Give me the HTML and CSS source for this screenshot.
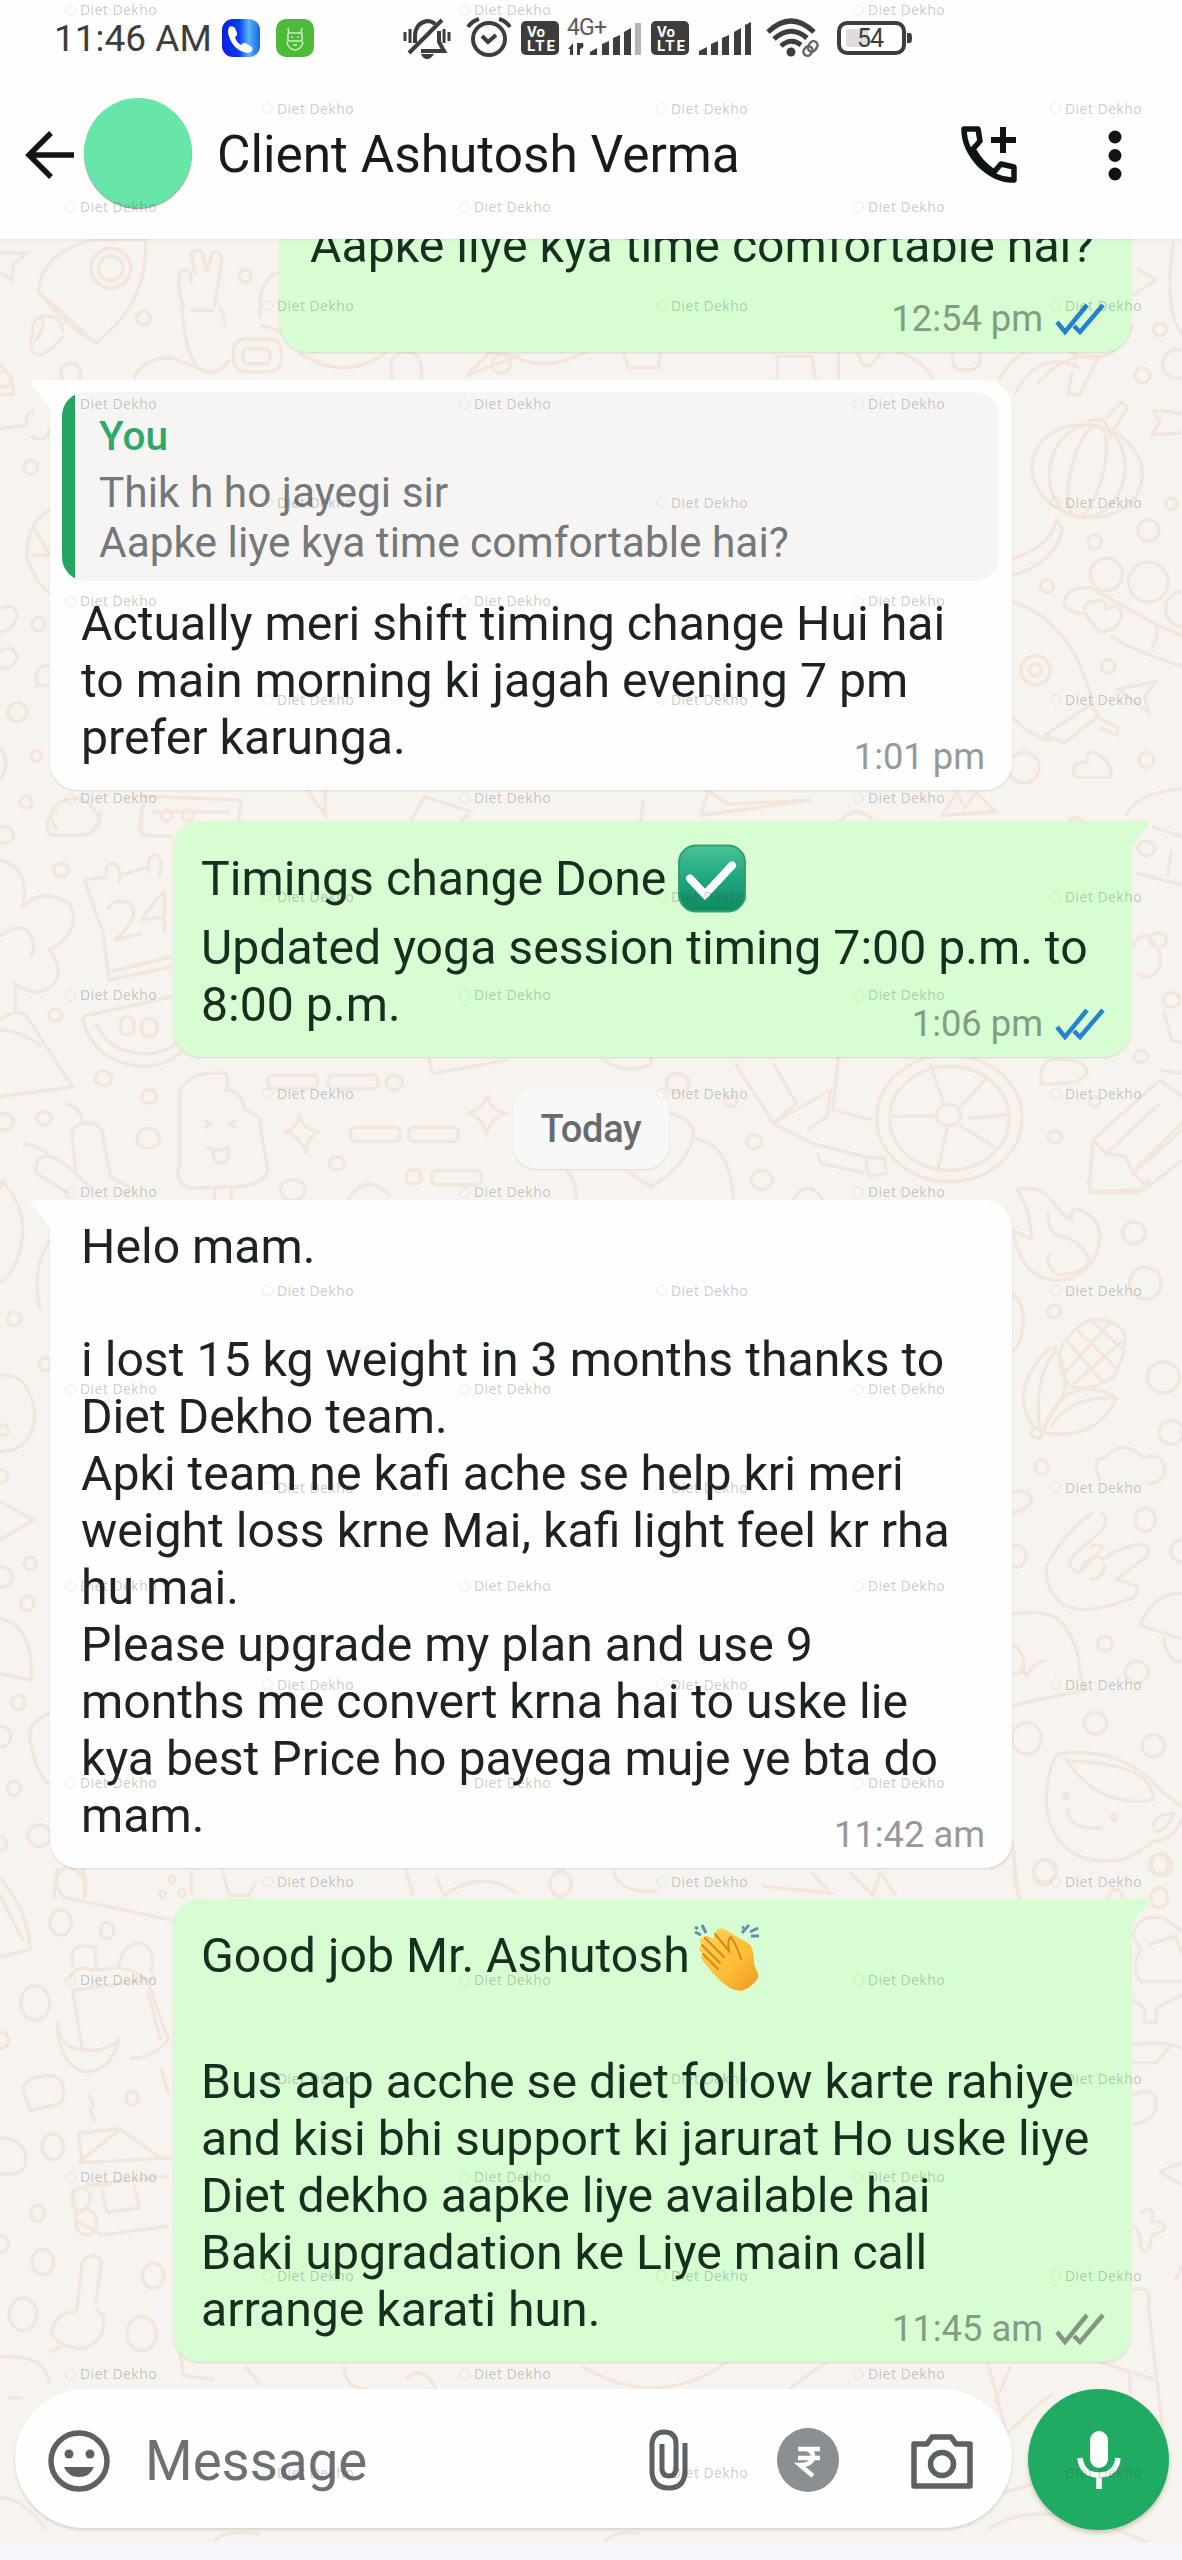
FILE: index.html
```html
<!DOCTYPE html>
<html lang="en">
<head>
<meta charset="utf-8">
<title>Client Ashutosh Verma</title>
<link rel="stylesheet" href="styles.css">
</head>
<body>
<div class="phone">

<svg class="wallpaper" viewBox="0 0 1182 2560" aria-hidden="true">
  <g transform="translate(0 230) scale(.3827)">
    <path d="M100 160Q110 60 240 25H380Q390 190 250 295ZM100 160Q160 240 250 295M165 280Q150 300 110 325Q70 330 85 270Q80 225 120 225Q165 225 165 270M110 230q10 30 -20 60M0 60H70L35 90L30 130L0 110M480 200Q460 150 470 110Q500 90 500 140M510 120L500 60Q515 45 530 60L540 110L555 60Q575 50 580 80L560 200M475 190Q480 300 510 350Q550 400 600 340M575 200L590 250M500 210h60M680 230Q670 130 730 110M680 250Q720 250 760 290M350 385Q380 330 450 335L540 370M0 350Q35 380 35 430H0M0 520L70 510Q60 490 90 470M80 540Q120 560 130 520M135 730Q70 760 70 850Q90 920 130 950M90 780L130 850L80 850M0 990Q40 970 45 1010Q30 1050 0 1050M0 1100Q40 1080 45 1120Q20 1160 0 1140M130 1140Q90 1130 95 1190H130M780 320Q900 400 1010 320M1025 390Q1010 320 1060 318Q1110 320 1100 390M1220 380L1280 320L1350 330L1220 380M1340 330Q1440 380 1560 300M150 1568Q110 1510 170 1490Q230 1470 260 1540L240 1568M360 1568L380 1480L630 1490L620 1568M400 1520h200M800 1460L850 1530L850 1460M1060 1568L1110 1480L1230 1520L1180 1568M0 1350Q30 1390 0 1440"/>
    <circle cx="290" cy="100" r="52"/><circle cx="290" cy="100" r="32"/><circle cx="640" cy="120" r="16"/><circle cx="375" cy="230" r="18"/><circle cx="185" cy="375" r="26"/><circle cx="10" cy="390" r="20"/><circle cx="80" cy="620" r="18"/><circle cx="100" cy="1030" r="17"/><circle cx="45" cy="1260" r="25"/><circle cx="95" cy="1375" r="14"/><circle cx="68" cy="1495" r="16"/><circle cx="435" cy="1530" r="14"/><circle cx="490" cy="1530" r="14"/><circle cx="1310" cy="350" r="24"/>
    <rect x="610" y="285" width="125" height="85" rx="30"/><rect x="635" y="310" width="70" height="40" rx="14"/>
  </g>
  <g transform="translate(582 230) scale(.3827)">
    <path d="M1450 100L1500 130L1440 170M1545 30Q1520 220 1568 270M1090 390Q1170 260 1280 320Q1380 370 1440 250M1130 430Q1190 310 1300 360M1190 400Q1260 320 1350 330L1300 430L1270 430L1280 370M1320 500Q1380 480 1380 545M1370 490L1410 450L1425 465L1390 520M1490 470L1568 480M1490 470L1510 500L1490 535L1568 530M1120 860Q1220 830 1240 760L1255 780Q1240 870 1120 905M1260 980Q1260 930 1330 935L1500 1030L1568 1060M1260 980Q1290 1010 1320 1000M1120 970Q1290 1020 1340 1260M1120 1270Q1180 1330 1230 1335M1210 1320L1330 1240L1350 1270L1260 1340ZM1340 1270L1400 1300L1400 1320L1350 1300M1400 1200L1500 1180L1470 1220L1480 1260ZM1320 1010Q1300 970 1340 970Q1370 960 1370 990Q1410 970 1410 1010Q1400 1050 1350 1050ZM1290 1430Q1270 1390 1320 1390Q1320 1350 1350 1370Q1390 1400 1380 1430ZM1420 1530Q1450 1470 1568 1460M1380 1060Q1440 1100 1568 1140M1500 1030Q1510 1060 1490 1090M510 390V330H600L610 390M670 390V320M720 320Q740 390 780 320M820 320Q880 330 920 390M110 320L120 360L200 360L205 320M970 320Q960 370 1000 365Q1050 370 1040 320M150 1568L160 1490M310 1530L330 1465L380 1500L600 1490L310 1530M660 1568Q700 1490 760 1540M940 1530L980 1470L1000 1510L1030 1470L1080 1520ZM1260 1568Q1290 1500 1320 1568"/>
    <ellipse cx="1320" cy="630" rx="145" ry="120" transform="rotate(12 1320 630)"/><ellipse cx="1320" cy="630" rx="98" ry="122" transform="rotate(12 1320 630)"/><ellipse cx="1320" cy="630" rx="42" ry="122" transform="rotate(14 1320 630)"/>
    <circle cx="1510" cy="260" r="17"/><circle cx="1465" cy="380" r="20"/><circle cx="1555" cy="350" r="38"/><circle cx="1340" cy="815" r="18"/><circle cx="1480" cy="785" r="28"/><circle cx="1540" cy="715" r="15"/><circle cx="1215" cy="930" r="17"/><circle cx="1370" cy="900" r="42"/><circle cx="1480" cy="920" r="52"/><circle cx="1570" cy="990" r="45"/><circle cx="1375" cy="1140" r="18"/><circle cx="1185" cy="1150" r="38"/><circle cx="1185" cy="1150" r="16"/><circle cx="1475" cy="1385" r="20"/><circle cx="1155" cy="1405" r="40"/>
  </g>
  <g transform="translate(0 810) scale(.3827 .3333)">
    <path d="M0 150Q80 170 60 290Q110 230 180 280Q220 360 130 420Q180 500 120 540Q80 560 40 520V610M0 380Q40 340 70 360Q100 400 80 440M0 630Q50 590 70 620L190 830L0 860M0 660Q50 660 110 710M280 200Q270 160 300 160Q320 180 310 220M390 190Q380 130 410 135Q430 160 415 200M320 195L385 170M220 210L280 200M220 210L270 370L285 510L450 470M290 485L450 440M280 300Q300 260 340 280Q370 320 300 390L370 370M430 240Q380 310 370 330L430 320M430 250V370M215 620L450 560M215 620Q240 760 380 770Q470 760 490 690M250 640Q290 740 400 730Q450 720 470 690M470 840Q500 780 590 790Q600 820 590 840Q630 840 640 900Q690 920 680 950L700 1080Q690 1130 610 1130L500 1135Q450 1120 470 1060ZM560 1135V1170M605 1130V1170M530 930l20 10l-15 15M620 930l-20 10l15 15M540 1010Q570 1030 600 1010M555 1020Q560 1060 575 1060Q600 1060 595 1015M780 910Q790 960 835 965Q800 980 800 1030Q780 970 740 965Q780 960 780 910M1275 855Q1280 900 1320 910Q1285 925 1270 970Q1260 920 1220 910Q1260 900 1275 855M170 880Q220 900 215 940Q180 950 190 1000L200 1100M215 940Q270 930 270 990L290 1100L350 1140M60 1000Q110 1010 130 1040Q90 1030 95 1090L180 1150M130 1040Q170 1050 240 1140M1120 745L1130 790L1330 750M910 1170Q960 1080 1020 1160M1480 1080Q1510 1120 1505 1170M130 75Q110 30 150 0M130 75H220Q270 60 260 0M370 0V75L450 80M0 1110Q60 1170 60 1270Q50 1380 0 1420M130 1290Q80 1380 105 1500"/>
    <circle cx="10" cy="75" r="25"/><circle cx="160" cy="180" r="20"/><circle cx="145" cy="615" r="18"/><circle cx="270" cy="805" r="22"/><circle cx="390" cy="860" r="20"/><circle cx="10" cy="935" r="25"/><circle cx="115" cy="925" r="20"/><circle cx="388" cy="985" r="30"/><circle cx="880" cy="1060" r="20"/><circle cx="1030" cy="818" r="22"/><circle cx="765" cy="1140" r="32"/>
    <rect x="315" y="620" width="35" height="55" rx="18"/><rect x="370" y="625" width="40" height="55" rx="20"/><rect x="700" y="795" width="130" height="42" rx="14"/><rect x="858" y="795" width="130" height="42" rx="14"/><rect x="915" y="952" width="130" height="42" rx="14"/><rect x="1068" y="952" width="130" height="42" rx="14"/><rect x="1128" y="1082" width="130" height="42" rx="14"/><rect x="1062" y="1080" width="38" height="42" rx="14"/>
  </g>
  <g transform="translate(582 810) scale(.3827 .3333)">
    <path d="M1490 50L1568 80M1450 190L1568 225M1540 120L1530 200M1440 410Q1450 370 1480 380Q1520 420 1510 470Q1480 520 1450 490M1520 600L1540 690L1568 700M400 760L500 940L560 880L500 760M500 940L600 1000L740 1040M500 940L650 840L640 920L590 960M670 740L655 900L760 930M615 1030L625 1060L740 1090M740 1040L790 1045L795 1090L750 1100ZM1200 800Q1200 740 1250 750Q1320 750 1320 790Q1300 830 1200 820ZM1510 810L1335 990L1325 1145L1470 1140L1568 1050M1335 990L1370 1030L1510 880M1370 1030L1420 1040L1440 1090L1480 1130M1440 1090L1568 960M1510 810L1568 860M1450 1070L1568 940M1510 780L1568 790M230 910Q300 930 290 990Q260 1080 180 1130L120 1085M290 985Q390 1000 395 1170M550 1170Q590 1100 630 1170M50 745Q120 800 180 760V740M910 760L945 880M1060 800L990 890M1110 915L1010 925M1090 1020L985 945M930 1080L955 950M805 920L930 918"/>
    <circle cx="960" cy="925" r="190"/><circle cx="960" cy="925" r="156"/><circle cx="958" cy="915" r="32"/><circle cx="1475" cy="115" r="22"/><circle cx="1505" cy="390" r="22"/><circle cx="1540" cy="570" r="22"/><circle cx="1460" cy="740" r="18"/><circle cx="1235" cy="980" r="18"/><circle cx="450" cy="995" r="20"/><circle cx="470" cy="1110" r="28"/><circle cx="250" cy="820" r="30"/><circle cx="390" cy="875" r="16"/><circle cx="1340" cy="875" r="14"/>
  </g>
  <g transform="translate(990 1180) scale(.3333 .4591)">
    <path d="M80 20Q160 10 190 50Q220 80 245 85Q240 60 270 65Q330 80 330 130Q310 220 190 218Q90 210 70 110L125 130Q120 60 80 20M175 70Q170 110 200 120Q280 130 300 180Q260 210 200 205Q160 180 180 160M290 0L310 28H440L480 0M65 250Q100 260 100 310Q95 360 65 375M180 365Q100 420 100 480Q110 530 150 545Q130 430 195 375M185 365Q230 390 225 460L160 545Q200 460 290 455Q340 455 380 475Q320 570 160 550M180 540Q240 470 370 475M120 555Q130 530 160 545L150 565ZM210 375Q230 330 300 305Q370 300 400 330Q420 360 370 430Q310 460 240 450Q200 410 210 375M230 350L340 440M260 325L380 410M300 305L400 370M225 420L360 310M250 445L405 345M320 630Q310 605 345 605Q400 560 460 605Q520 590 525 635Q510 665 470 660M320 630L330 655M65 680Q120 670 125 700Q110 720 65 725M330 725Q360 730 340 760L240 825Q235 850 270 855L340 800Q330 790 300 800M350 815L430 795Q490 790 470 820L380 870L440 885Q450 910 410 915Q280 950 220 925Q160 890 170 840Q230 760 310 725M270 855Q290 810 340 825L370 815M300 870Q340 870 345 835M65 945Q200 930 230 980Q270 1020 270 1080L290 1110L65 1145M65 1010Q110 1030 100 1070L65 1080M170 1045Q130 1050 110 1080L90 1060M576 900Q490 900 450 970L576 1000M520 995Q530 1050 576 1050M200 1250Q400 1230 520 1335L576 1365M200 1250Q150 1330 180 1400Q230 1500 400 1480Q460 1460 490 1440Q550 1440 576 1390M230 1265Q490 1270 490 1350Q330 1370 230 1265ZM230 1370Q240 1420 340 1410M490 1410Q490 1380 550 1380Q530 1420 490 1420M0 1500Q60 1490 70 1440Q70 1500 90 1568"/>
    <ellipse cx="432" cy="115" rx="34" ry="24"/><ellipse cx="466" cy="225" rx="48" ry="35"/><ellipse cx="192" cy="286" rx="20" ry="14"/><ellipse cx="520" cy="430" rx="48" ry="34"/><ellipse cx="544" cy="550" rx="36" ry="26"/><ellipse cx="155" cy="625" rx="20" ry="16"/><ellipse cx="466" cy="740" rx="30" ry="26"/><ellipse cx="576" cy="808" rx="34" ry="24"/><ellipse cx="80" cy="820" rx="28" ry="24"/><ellipse cx="345" cy="1010" rx="22" ry="16"/><ellipse cx="440" cy="1072" rx="34" ry="24"/><ellipse cx="316" cy="1183" rx="34" ry="24"/><ellipse cx="490" cy="1232" rx="34" ry="24"/><ellipse cx="110" cy="1216" rx="44" ry="34"/><ellipse cx="512" cy="1492" rx="34" ry="24"/><ellipse cx="165" cy="1505" rx="34" ry="24"/><circle cx="227" cy="1342" r="6"/><circle cx="372" cy="1388" r="8"/>
  </g>
  <g transform="translate(0 1180) scale(.3333 .4591)">
    <path d="M0 425Q90 420 105 510Q100 590 0 592M0 700L100 740L0 785M0 955Q100 970 95 1090L0 1075M155 1160Q80 1180 90 1220Q110 1300 155 1320M165 1568Q150 1490 240 1490Q270 1530 250 1568M0 20Q10 0 20 0"/>
    <ellipse cx="42" cy="302" rx="20" ry="16"/><ellipse cx="135" cy="402" rx="18" ry="14"/><ellipse cx="10" cy="545" rx="16" ry="12"/><ellipse cx="5" cy="645" rx="18" ry="14"/><ellipse cx="90" cy="835" rx="18" ry="14"/><ellipse cx="8" cy="865" rx="28" ry="22"/><ellipse cx="82" cy="922" rx="20" ry="16"/><ellipse cx="55" cy="1138" rx="20" ry="16"/><ellipse cx="5" cy="1212" rx="28" ry="22"/><ellipse cx="42" cy="1325" rx="20" ry="16"/><ellipse cx="118" cy="1428" rx="34" ry="24"/><ellipse cx="0" cy="1445" rx="20" ry="16"/>
  </g>
  <g transform="translate(0 1850) scale(.3827 .4529)">
    <path d="M0 60Q70 130 80 220L0 235M0 100L60 200M150 40Q140 90 170 105L450 155M180 40Q230 50 220 100M500 45V100M190 260Q180 210 220 212L250 215V260M310 260Q320 210 360 205Q410 210 395 270M180 285Q200 250 240 265L310 260Q380 270 390 300L440 420Q400 460 340 460M190 310L400 285M190 310L215 440M385 310L420 420M150 380Q160 440 210 440Q270 450 310 420Q290 490 220 490Q150 470 150 380M60 530Q60 505 110 500Q170 490 165 540Q170 560 130 565L80 575ZM230 540Q250 560 235 575L250 600M420 480L440 540M205 625L310 615M205 625L215 690L445 680M310 615L420 680M0 635Q80 640 65 700Q50 720 0 715M205 690L310 620M220 740L440 720M265 750L280 800L365 790L350 740M190 750L200 820L270 850L440 830M230 740h60M200 1020L215 910Q250 880 265 910L250 1000M200 1020Q140 1020 135 1070Q160 1100 220 1100Q280 1080 270 1030L250 1010M0 1120Q120 1110 130 1180M130 1110L160 1095M20 1210H60M0 1430Q60 1430 120 1500M470 1110L480 1160L560 1170M640 1140L680 1180M900 1140Q900 1190 960 1190M580 45L600 100H650L670 70M1060 45L1080 100M1140 60L1160 100Q1260 40 1350 95M1060 1170Q1100 1130 1140 1190M560 1530Q570 1500 680 1510"/>
    <circle cx="158" cy="160" r="28"/><circle cx="280" cy="178" r="18"/><circle cx="92" cy="338" r="38"/><circle cx="5" cy="420" r="18"/><circle cx="345" cy="548" r="16"/><circle cx="138" cy="655" r="28"/><circle cx="98" cy="802" r="18"/><circle cx="5" cy="870" r="18"/><circle cx="112" cy="910" r="28"/><circle cx="400" cy="940" r="28"/><circle cx="60" cy="1025" r="36"/><circle cx="370" cy="1068" r="38"/><circle cx="212" cy="770" r="24"/><circle cx="225" cy="822" r="28"/><circle cx="1465" cy="75" r="28"/><circle cx="450" cy="65" r="8"/><circle cx="425" cy="98" r="8"/><circle cx="475" cy="95" r="8"/>
  </g>
  <g transform="translate(582 1850) scale(.3827 .4529)">
    <path d="M1130 0V70L1140 100M1440 190Q1450 140 1520 150L1568 180M1440 190L1460 220Q1430 260 1460 290L1568 290M1480 210L1550 190L1568 230M1440 330L1470 350V380H1500V350M1500 350L1568 320M1440 430Q1540 420 1568 440M1440 470H1500L1540 430M1440 540Q1500 520 1500 560Q1500 600 1440 605M1510 710L1568 690M1510 710L1568 740M1460 800Q1500 780 1490 820Q1530 820 1520 840L1490 850Q1480 900 1460 880Q1460 840 1440 830M1550 950L1568 920M1440 970Q1490 960 1480 1010L1530 1370M1430 1150L1440 1300M1060 1130L1110 1290Q1180 1230 1230 1200M1120 1140L1080 1220M1350 1130L1500 1170M80 45Q100 100 200 90M470 80L650 95L600 50M700 50L760 100L780 50L820 100M0 1140Q200 1240 380 1130M540 1190L640 1130M1100 1420L1180 1400M1060 1500Q1200 1420 1480 1530M60 1530Q80 1500 150 1510"/>
    <circle cx="1208" cy="50" r="28"/><circle cx="1510" cy="32" r="22"/><circle cx="1395" cy="105" r="18"/><circle cx="1508" cy="105" r="22"/>
  </g>
</svg>

<header class="top">
  <div class="statusbar">
    <span class="clock">11:46 AM</span>
    <svg class="app-phone" viewBox="0 0 38 38"><defs><linearGradient id="blue"><stop offset="0" stop-color="#0c1fe0"/><stop offset=".45" stop-color="#0b3df0"/><stop offset=".7" stop-color="#57b6fb"/><stop offset="1" stop-color="#1a63e6"/></linearGradient></defs><rect width="38" height="38" rx="11" fill="url(#blue)"/><path d="M7 8Q10 6 13 9L15 14Q16 16 13 18Q14 23 19 26Q22 22 25 25L30 28Q32 33 26 34Q16 33 10 24Q4 14 7 8Z" fill="#fff"/></svg>
    <svg class="app-green" viewBox="0 0 38 38"><rect width="38" height="38" rx="10" fill="#4dba3a"/><g fill="none" stroke="#c9f0bd" stroke-width="1.600"><path d="M12 9L13 14H25L26 9M12 14V22H26V14M11 23Q12 30 19 31Q26 30 27 23"/><path d="M15 18h2M21 18h2M17 26h4"/></g></svg>
    <div class="indicators">
      <svg width="48" height="42" viewBox="0 0 48 42"><g fill="none" stroke="#3d3d3d" stroke-width="4"><path d="M12 26V18Q13 6 24 4Q29 4 32 7M36 14V25L41 34H18"/><path d="M6 36L39 3"/><path d="M2 15v9M7 12v14M46 15v9M41 12v14" stroke-width="3"/></g><path d="M18 37H31Q28 42 24 42Q20 42 18 37Z" fill="#3d3d3d"/></svg>
      <svg class="alarm" width="44" height="40" viewBox="0 0 44 40"><g fill="none" stroke="#3d3d3d" stroke-width="4"><circle cx="22" cy="22" r="16"/><path d="M1 10Q5 4 12 2M43 10Q39 4 32 2M15 19L21 25L29 18"/></g></svg>
      <svg class="volte" width="38" height="34" viewBox="0 0 38 34"><rect width="38" height="34" rx="5" fill="#3d3d3d"/><text x="6" y="16" class="lte">Vo</text><text x="6" y="30" class="lte" textLength="28">LTE</text></svg>
      <svg class="sig" width="74" height="40" viewBox="0 0 74 40"><text x="0" y="18" class="net" textLength="40">4G+</text><g fill="#3d3d3d"><path d="M1 32L6 26V38H3V32ZM10 26H16Q18 31 13 32V38H10ZM23 38V35L30 31V38ZM35 38V27L42 24V38ZM46 38V21L53 18V38ZM57 38V15L64 11V38Z"/><path d="M68 38V6H74V38Z" fill="#b5b5b5"/></g></svg>
      <svg class="volte2" width="38" height="34" viewBox="0 0 38 34"><rect width="38" height="34" rx="5" fill="#3d3d3d"/><text x="6" y="16" class="lte">Vo</text><text x="6" y="30" class="lte" textLength="28">LTE</text></svg>
      <svg class="sig2" width="52" height="40" viewBox="0 0 52 40"><path fill="#3d3d3d" d="M0 38V34L8 30V38ZM12 38V27L19 24V38ZM23 38V21L30 18V38ZM35 38V15L42 11V38ZM46 38V8L52 5V38Z"/></svg>
      <svg class="wifi" width="55" height="40" viewBox="0 0 55 40"><g fill="none" stroke="#3d3d3d" stroke-width="5"><path d="M2 15Q25 -7 48 15M8 22Q25 7 41 21M15 29Q25 20 35 28"/><g stroke-width="2.500" stroke="#666"><rect x="43" y="24" width="8" height="11" rx="4" transform="rotate(35 47 29)"/><rect x="38" y="29" width="8" height="10" rx="4" transform="rotate(35 42 34)"/></g></g><circle cx="25" cy="35" r="4.500" fill="#3d3d3d"/></svg>
      <svg class="battery" width="76" height="34" viewBox="0 0 76 34"><rect x="2" y="2" width="65" height="30" rx="8" fill="none" stroke="#3d3d3d" stroke-width="4"/><rect x="9" y="8" width="22" height="18" rx="2" fill="#ddd"/><path d="M70 12h3q2 0 2 5t-2 5h-3z" fill="#3d3d3d"/><text x="20" y="26" class="pct" textLength="27">54</text></svg>
    </div>
  </div>
  <div class="titlebar">
    <svg class="back" width="48" height="48" viewBox="0 0 48 48"><path d="M25 2L3 24L25 46M3 24H48" fill="none" stroke="#111418" stroke-width="5.500"/></svg>
    <div class="avatar"></div>
    <h1 class="name">Client Ashutosh Verma</h1>
    <svg class="call" width="56" height="58" viewBox="0 0 56 58"><g fill="none" stroke="#0f1417" stroke-width="5.500"><path d="M3 3H17L19 15L12 23Q20 38 33 46L40 38L53 41V54Q36 55 19 39Q3 22 3 3Z" stroke-linejoin="round"/><path d="M42 1V27M30 14H55" stroke-width="6"/></g></svg>
    <svg class="more" width="14" height="52" viewBox="0 0 14 52"><g fill="#0f1417"><circle cx="7" cy="7" r="6.500"/><circle cx="7" cy="25.500" r="6.500"/><circle cx="7" cy="44" r="6.500"/></g></svg>
  </div>
</header>

<main class="chat">
  <article class="bubble out first">
    <p class="text">Aapke liye kya time comfortable hai?</p>
    <div class="meta"><time>12:54 pm</time><svg class="ticks read" viewBox="0 0 48 30"><path d="M1 18L9 28L31 1M18 22L24 28L47 1"/></svg></div>
  </article>

  <article class="bubble in tail quoted">
    <blockquote class="quote"><strong>You</strong><p>Thik h ho jayegi sir<br>Aapke liye kya time comfortable hai?</p></blockquote>
    <p class="text">Actually meri shift timing change Hui hai<br>to main morning ki jagah evening 7 pm<br>prefer karunga.</p>
    <div class="meta"><time>1:01 pm</time></div>
  </article>

  <article class="bubble out tail timing">
    <div class="text"><p class="emoji-line">Timings change Done <svg class="check" viewBox="0 0 68 68"><defs><linearGradient id="grn" x2="0" y2="1"><stop offset="0" stop-color="#4cc39a"/><stop offset=".45" stop-color="#21a980"/><stop offset="1" stop-color="#0c8a62"/></linearGradient></defs><rect x="1" y="1" width="66" height="66" rx="17" fill="url(#grn)" stroke="#369c74" stroke-width="2"/><path d="M12 34L27 50L54 21" fill="none" stroke="#fff" stroke-width="8" stroke-linecap="round"/></svg></p><p>Updated yoga session timing 7:00 p.m. to<br>8:00 p.m.</p></div>
    <div class="meta"><time>1:06 pm</time><svg class="ticks read" viewBox="0 0 48 30"><path d="M1 18L9 28L31 1M18 22L24 28L47 1"/></svg></div>
  </article>

  <div class="day">Today</div>

  <article class="bubble in tail long">
    <p class="text">Helo mam.<br><br>i lost 15 kg weight in 3 months thanks to<br>Diet Dekho team.<br>Apki team ne kafi ache se help kri meri<br>weight loss krne Mai, kafi light feel kr rha<br>hu mai.<br>Please upgrade my plan and use 9<br>months me convert krna hai to uske lie<br>kya best Price ho payega muje ye bta do<br>mam.</p>
    <div class="meta"><time>11:42 am</time></div>
  </article>

  <article class="bubble out tail praise">
    <div class="text"><p class="emoji-line">Good job Mr. Ashutosh<svg class="clap" viewBox="0 0 68 68"><defs><linearGradient id="skin" x2="1" y2="1"><stop offset="0" stop-color="#ffd45c"/><stop offset=".6" stop-color="#fdbd35"/><stop offset="1" stop-color="#ee9526"/></linearGradient></defs><path d="M22 10Q24 3 31 5L55 19Q61 23 61 40L65 50Q67 54 59 61Q50 69 42 66Q29 62 10 37Q6 33 10 30Q3 24 9 21Q4 15 10 13Q14 10 20 15Z" fill="url(#skin)"/><path d="M9 21L27 39M10 30L25 45M12 14L31 33M22 10L36 27Q34 15 38 13Q43 20 48 35" fill="none" stroke="#d88717" stroke-width="2" stroke-linecap="round"/><path d="M2 8L8 11M9 1L13 9M2 3L5 5M49 9L56 1M57 8L65 4M58 12L66 12M49 3L51 4" stroke="#5c91b4" stroke-width="3"/></svg></p><p><br>Bus aap acche se diet follow karte rahiye<br>and kisi bhi support ki jarurat Ho uske liye<br>Diet dekho aapke liye available hai<br>Baki upgradation ke Liye main call<br>arrange karati hun.</p></div>
    <div class="meta"><time>11:45 am</time><svg class="ticks" viewBox="0 0 48 30"><path d="M1 18L9 28L31 1M18 22L24 28L47 1"/></svg></div>
  </article>
</main>

<footer class="composer">
  <div class="field">
    <svg class="smile" width="62" height="62" viewBox="0 0 62 62"><circle cx="31" cy="31" r="28" fill="none" stroke="#5b6165" stroke-width="5.500"/><circle cx="21" cy="24" r="4.500" fill="#5b6165"/><circle cx="42" cy="24" r="4.500" fill="#5b6165"/><path d="M16 37H46Q42 47 31 47Q20 47 16 37Z" fill="#5b6165"/></svg>
    <span class="placeholder">Message</span>
    <svg class="clip" width="40" height="62" viewBox="0 0 40 62"><path d="M36 14V43Q35 59 20 59Q4 59 3 43V15Q4 3 15 3Q27 3 27 15V41Q26 47 20 47Q14 47 13 41V15" fill="none" stroke="#5b6165" stroke-width="5"/></svg>
    <svg class="rupee" width="62" height="64" viewBox="0 0 62 64"><ellipse cx="31" cy="32" rx="31" ry="32" fill="#8a8f93"/><path d="M21 21H43M21 30H43M21 21H27Q36 21 36 29Q35 37 23 37L36 48" fill="none" stroke="#fff" stroke-width="4.500"/></svg>
    <svg class="camera" width="62" height="56" viewBox="0 0 62 56"><g fill="none" stroke="#5b6165" stroke-width="5.500" stroke-linejoin="round"><path d="M3 10H16L21 3H40L45 10H59V52H3Z"/><circle cx="31" cy="30" r="11.500"/></g></svg>
  </div>
  <div class="mic"><svg width="44" height="60" viewBox="0 0 44 60"><rect x="13" y="1" width="18" height="37" rx="9" fill="#fff"/><path d="M3 28Q5 45 22 45Q39 45 41 28M22 45V59" fill="none" stroke="#fff" stroke-width="5.500"/></svg></div>
</footer>
<div class="navstrip"></div>

<div class="watermarks" id="watermarks" aria-hidden="true"></div>
</div>
<script src="watermarks.js"></script>
</body>
</html>
```
FILE: styles.css
```css
* { box-sizing: border-box; margin: 0; padding: 0; }
body { background: #f7f3ee; font-family: Roboto, "Liberation Sans", sans-serif; }
svg { display: block; flex: none; overflow: visible; }
.phone { position: relative; width: 1182px; height: 2560px; overflow: hidden; display: flex; flex-direction: column; isolation: isolate; }

.wallpaper { position: absolute; inset: 0; width: 1182px; height: 2560px; z-index: -1; fill: none; stroke: #f3e6dd; stroke-width: 3.200; overflow: hidden; }
.wallpaper path, .wallpaper circle, .wallpaper ellipse, .wallpaper rect { vector-effect: non-scaling-stroke; }

.top { height: 239px; flex: none; background: #fefefe; position: relative; z-index: 1; box-shadow: 0 1px 3px rgba(0, 0, 0, .07); }
.statusbar { display: flex; align-items: flex-start; padding-left: 54px; height: 98px; color: #3d3d3d; }
.clock { font-size: 37px; line-height: 44px; margin-top: 17px; width: 168px; white-space: nowrap; }
.app-phone { width: 38px; height: 40px; margin-top: 18px; }
.app-green { width: 38px; height: 40px; margin: 18px 0 0 16px; }
.indicators { display: flex; margin-left: 89px; align-items: flex-start; padding-top: 17px; }
.alarm { margin-left: 16px; }
.volte { margin: 4px 0 0 10px; }
.sig { margin-left: 8px; }
.volte2 { margin: 4px 0 0 10px; }
.sig2 { margin-left: 10px; }
.wifi { margin-left: 15px; }
.battery { margin: 4px 0 0 16px; }
.lte { font: 700 15px Roboto, sans-serif; fill: #fff; }
.net { font: 400 23px Roboto, sans-serif; fill: #5a5a5a; }
.pct { font: 400 25px Roboto, sans-serif; fill: #3d3d3d; }

.titlebar { display: flex; align-items: flex-start; padding-left: 26px; }
.back { margin-top: 33px; }
.avatar { width: 108px; height: 110px; border-radius: 50%; background: #68e5a8; margin-left: 10px; box-shadow: 0 1px 1px #8b9a90; }
.name { margin: 27px 0 0 25px; width: 744px; font-size: 51.4px; line-height: 60px; font-weight: 400; color: #181b1e; white-space: nowrap; }
.call { margin-top: 28px; }
.more { margin: 32px 0 0 91px; }

.chat { display: flex; flex-direction: column; align-items: flex-start; flex: none; height: 2150px; }
.bubble { position: relative; display: grid; flex: none; border-radius: 27px; box-shadow: 0 1px 2px rgba(60, 50, 30, .14); font-size: 48.2px; line-height: 56.9px; white-space: nowrap; color: #1d2225; }
.in { width: 962px; margin-left: 50px; background: #fefefe; padding: 0 0 0 31px; }
.out { width: 958px; margin-left: 173px; background: #d8fdd2; padding: 0 0 0 28px; color: #15301f; }
.text { grid-area: 2 / 1; padding-bottom: 23px; }
.meta { grid-area: 2 / 1; align-self: end; justify-self: end; display: flex; align-items: center; gap: 13px; margin: 0 27px 11px 0; font-size: 36.300px; line-height: 44px; color: #959999; }
.out .meta { color: #839c84; }
.ticks { width: 48px; height: 30px; fill: none; stroke: #849684; stroke-width: 4.500; }
.read { stroke: #2480d0; }

.in.tail { border-top-left-radius: 0; }
.out.tail { border-top-right-radius: 0; }
.tail::before { content: ""; position: absolute; top: 0; width: 21px; height: 29px; background: inherit; }
.in.tail::before { left: -20px; clip-path: polygon(0 0, 100% 0, 100% 100%, 10% 18%); }
.out.tail::before { right: -19px; clip-path: polygon(0 0, 100% 0, 90% 18%, 0 100%); }

.first { width: 851px; margin-left: 280px; padding-left: 30px; height: 134px; margin-top: -21px; }
.first .text { padding: 0; }
.first .text, .first .meta { grid-row: 1; }
.quoted { margin-top: 28px; padding-top: 12px; }
.quoted .text { padding-top: 15px; }
.quote { grid-area: 1 / 1; width: 937px; height: 189px; margin-left: -19px; border-radius: 24px; background: linear-gradient(90deg, #25a562 13px, #f6f5f4 13px); padding: 19px 0 0 37px; font-size: 42.400px; line-height: 50px; color: #74787b; }
.quote strong { display: block; font-weight: 500; font-size: 40.500px; line-height: 51px; height: 57px; color: #2fa96a; }
.timing { margin-top: 31px; padding-top: 30px; }
.emoji-line { display: flex; height: 70px; white-space: pre; }
.timing .emoji-line { height: 69px; }
.check { width: 68px; height: 69px; margin: -7px 0 0 0; }
.clap { width: 68px; height: 68px; margin: -4px 0 0 3px; }
.day { align-self: center; flex: none; width: 156px; height: 82px; margin-top: 30px; border-radius: 24px; background: #f8f8f8; box-shadow: 0 1px 2px rgba(60, 50, 30, .12); font-size: 38px; line-height: 84px; font-weight: 500; letter-spacing: -.3px; text-align: center; color: #666b6f; }
.long { margin-top: 31px; padding-top: 19px; }
.praise { margin-top: 31px; padding-top: 29px; }

.composer { display: flex; align-items: flex-start; flex: none; height: 154px; padding-left: 15px; }
.field { display: flex; align-items: flex-start; width: 997px; height: 139px; border-radius: 70px; background: #fefefe; box-shadow: 0 2px 3px rgba(60, 50, 30, .16); padding-left: 33px; }
.smile { margin-top: 41px; }
.placeholder { margin: 39px 0 0 35px; width: 504px; font-size: 54.600px; line-height: 66px; color: #6c7174; }
.clip { margin-top: 40px; }
.rupee { margin: 39px 0 0 88px; }
.camera { margin: 45px 0 0 72px; }
.mic { display: flex; justify-content: center; align-items: center; width: 141px; height: 141px; margin-left: 16px; border-radius: 50%; background: #1fab61; box-shadow: 0 3px 4px rgba(60, 50, 30, .22); }
.navstrip { height: 17px; flex: none; background: #f8f8fc; }

.watermarks { position: absolute; inset: 0; z-index: 2; pointer-events: none; overflow: hidden; }
.wm-row { display: flex; gap: 302px; height: 98.5px; padding-left: 65px; }
.wm-row.odd { padding-left: 262px; }
.wm { display: flex; align-items: center; width: 92px; height: 20px; flex: none; gap: 4px; font: 400 14px/20px "Open Sans", sans-serif; letter-spacing: .45px; white-space: nowrap; color: rgba(70, 75, 75, .3); }
.wm i { width: 11px; height: 11px; border-radius: 50%; border: 1.500px solid rgba(110, 160, 80, .16); flex: none; }
```
FILE: watermarks.js
```js
// Tile the brand mark in staggered rows across the screen.
const layer = document.getElementById('watermarks');
for (let r = 0; r < 26; r++) {
  const row = document.createElement('div');
  row.className = r % 2 ? 'wm-row odd' : 'wm-row';
  for (let c = 0; c < 3; c++) {
    const mark = document.createElement('span');
    mark.className = 'wm';
    mark.append(document.createElement('i'), 'Diet Dekho');
    row.append(mark);
  }
  layer.append(row);
}
```
